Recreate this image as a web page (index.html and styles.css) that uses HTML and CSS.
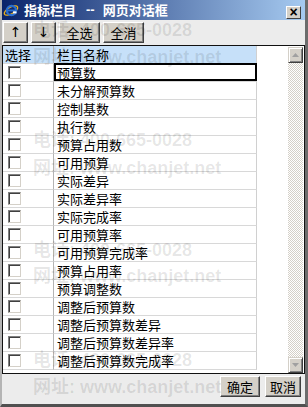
FILE: index.html
```html
<!DOCTYPE html>
<html lang="zh-CN">
<head>
    <meta charset="UTF-8">
    <title>指标栏目 -- 网页对话框</title>
    <link rel="stylesheet" href="styles.css">
</head>
<body>
    <div class="window">
        <div class="titlebar">
            <svg class="ie-icon" width="16" height="16" viewBox="0 0 16 16">
                <ellipse cx="8" cy="8.5" rx="7.5" ry="3.2" transform="rotate(-30 8 8.5)" fill="none" stroke="#e8b020" stroke-width="1.4"/>
                <circle cx="8.5" cy="8.5" r="4.6" fill="none" stroke="#2a6fd0" stroke-width="2.2"/>
                <rect x="4.5" y="7.6" width="8" height="1.8" fill="#2a6fd0"/>
                <rect x="10" y="9.4" width="3.5" height="2" fill="#fff"/>
            </svg>
            <span class="title">指标栏目</span>
            <span class="title title-sep">--</span>
            <span class="title">网页对话框</span>
            <button class="close-btn">×</button>
        </div>

        <div class="toolbar">
            <button class="btn btn-arrow">↑</button>
            <button class="btn btn-arrow">↓</button>
            <button class="btn btn-wide">全选</button>
            <button class="btn btn-wide">全消</button>
        </div>

        <div class="grid-box">
            <div class="grid-main">
                <div class="grid-head">
                    <div class="cell col-check">选择</div>
                    <div class="cell col-name">栏目名称</div>
                </div>
                <div class="grid-body">
                    <div class="row"><div class="cell col-check"><span class="checkbox"></span></div><div class="cell col-name selected">预算数</div></div>
                    <div class="row"><div class="cell col-check"><span class="checkbox"></span></div><div class="cell col-name">未分解预算数</div></div>
                    <div class="row"><div class="cell col-check"><span class="checkbox"></span></div><div class="cell col-name">控制基数</div></div>
                    <div class="row"><div class="cell col-check"><span class="checkbox"></span></div><div class="cell col-name">执行数</div></div>
                    <div class="row"><div class="cell col-check"><span class="checkbox"></span></div><div class="cell col-name">预算占用数</div></div>
                    <div class="row"><div class="cell col-check"><span class="checkbox"></span></div><div class="cell col-name">可用预算</div></div>
                    <div class="row"><div class="cell col-check"><span class="checkbox"></span></div><div class="cell col-name">实际差异</div></div>
                    <div class="row"><div class="cell col-check"><span class="checkbox"></span></div><div class="cell col-name">实际差异率</div></div>
                    <div class="row"><div class="cell col-check"><span class="checkbox"></span></div><div class="cell col-name">实际完成率</div></div>
                    <div class="row"><div class="cell col-check"><span class="checkbox"></span></div><div class="cell col-name">可用预算率</div></div>
                    <div class="row"><div class="cell col-check"><span class="checkbox"></span></div><div class="cell col-name">可用预算完成率</div></div>
                    <div class="row"><div class="cell col-check"><span class="checkbox"></span></div><div class="cell col-name">预算占用率</div></div>
                    <div class="row"><div class="cell col-check"><span class="checkbox"></span></div><div class="cell col-name">预算调整数</div></div>
                    <div class="row"><div class="cell col-check"><span class="checkbox"></span></div><div class="cell col-name">调整后预算数</div></div>
                    <div class="row"><div class="cell col-check"><span class="checkbox"></span></div><div class="cell col-name">调整后预算数差异</div></div>
                    <div class="row"><div class="cell col-check"><span class="checkbox"></span></div><div class="cell col-name">调整后预算数差异率</div></div>
                    <div class="row last"><div class="cell col-check"><span class="checkbox"></span></div><div class="cell col-name">调整后预算数完成率</div></div>
                </div>
            </div>
            <div class="scrollbar">
                <div class="sb-btn">
                    <svg width="7" height="4" viewBox="0 0 7 4"><polygon points="3.5,0 7,4 0,4" fill="#a0a0a0"/></svg>
                </div>
                <div class="sb-track"></div>
                <div class="sb-btn">
                    <svg width="7" height="4" viewBox="0 0 7 4"><polygon points="0,0 7,0 3.5,4" fill="#a0a0a0"/></svg>
                </div>
            </div>
        </div>

        <div class="footer">
            <button class="btn btn-ok">确定</button>
            <button class="btn btn-cancel">取消</button>
        </div>

        <!-- watermark over the whole dialog -->
        <div class="watermark">
            <div class="wm-line" style="top: 22px">电话: 400-665-0028</div>
            <div class="wm-line" style="top: 49px">网址: www.chanjet.net</div>
            <div class="wm-line" style="top: 132px">电话: 400-665-0028</div>
            <div class="wm-line" style="top: 160px">网址: www.chanjet.net</div>
            <div class="wm-line" style="top: 242px">电话: 400-665-0028</div>
            <div class="wm-line" style="top: 268px">网址: www.chanjet.net</div>
            <div class="wm-line" style="top: 352px">电话: 400-665-0028</div>
            <div class="wm-line" style="top: 379px">网址: www.chanjet.net</div>
        </div>
    </div>
</body>
</html>
```

FILE: styles.css
```css
body {
    margin: 0;
    font-family: "Noto Sans CJK SC", "Liberation Sans", sans-serif;
    font-size: 13px;
    color: #000;
}
.window {
    position: relative;
    width: 308px;
    height: 407px;
    box-sizing: border-box;
    display: flex;
    flex-direction: column;
    background-color: #ececec;
    border-left: 2px solid #b4b4b4;
    border-right: 3px solid #6c6c6c;
    border-bottom: 3px solid #505050;
    overflow: hidden;
}
.titlebar {
    height: 20px;
    flex: none;
    display: flex;
    align-items: center;
    background: linear-gradient(to right, #0a246a, #a6caf0);
}
.ie-icon {
    margin-left: 1px;
    flex: none;
}
.title {
    margin-left: 5px;
    color: #fff;
    font-weight: bold;
    font-size: 13px;
    white-space: pre;
    line-height: 20px;
}
.title-sep {
    margin: 0 8px 0 10px;
    font-family: "Liberation Sans", sans-serif;
}
.title-sep + .title {
    margin-left: 0;
}
.close-btn {
    margin-left: auto;
    margin-right: 4px;
    align-self: flex-end;
    margin-bottom: 1px;
    width: 15px;
    height: 13px;
    padding: 0;
    background-color: #d4d0c8;
    border: 1px solid;
    border-color: #fff #404040 #404040 #fff;
    font-family: "Liberation Sans", sans-serif;
    font-size: 14px;
    font-weight: bold;
    line-height: 9px;
    color: #000;
}
.btn {
    height: 21px;
    padding: 0;
    background-color: #d4d0c8;
    border: 1px solid;
    border-color: #fff #404040 #404040 #fff;
    box-shadow: inset -1px -1px 0 #808080;
    font-family: "Noto Sans CJK SC", sans-serif;
    font-size: 13px;
    line-height: 17px;
    color: #000;
}
.toolbar {
    height: 25px;
    flex: none;
    box-sizing: border-box;
    display: flex;
    gap: 3px;
    padding: 2px 0 0 1px;
}
.btn-arrow {
    width: 25px;
    font-family: "DejaVu Sans", sans-serif;
    font-size: 14px;
}
.btn-wide {
    width: 41px;
}
.grid-box {
    height: 329px;
    flex: none;
    box-sizing: border-box;
    display: flex;
    border: 1px solid #111;
    background-color: #fff;
}
.grid-main {
    flex: 1;
}
.grid-head,
.row {
    display: flex;
    width: 254px;
}
.grid-head {
    height: 17px;
    background-color: #c6e0f9;
}
.cell {
    box-sizing: border-box;
    display: flex;
    align-items: center;
    white-space: nowrap;
}
.col-check {
    width: 51px;
    border-right: 1px solid #b4b4b4;
}
.col-name {
    width: 203px;
    padding-left: 3px;
    border-right: 1px solid #d0d0d0;
}
.grid-head .col-check {
    padding-left: 2px;
}
.row .cell {
    height: 18px;
    border-top: 1px solid #d8d8d8;
}
.row.last .cell {
    height: 19px;
    border-bottom: 1px solid #d8d8d8;
}
.row .col-check {
    padding-left: 5px;
}
.grid-body {
    border-right: 1px solid #d0d0d0;
    width: 253px;
    height: 306px;
}
.selected {
    outline: 2px solid #000;
    outline-offset: -2px;
}
.checkbox {
    width: 13px;
    height: 13px;
    box-sizing: border-box;
    background-color: #fff;
    border: 1px solid;
    border-color: #808080 #d4d0c8 #d4d0c8 #808080;
    box-shadow: inset 1px 1px 0 #404040;
}
.scrollbar {
    width: 15px;
    margin: 1px 1px 0 0;
    display: flex;
    flex-direction: column;
}
.sb-btn {
    height: 16px;
    box-sizing: border-box;
    display: flex;
    align-items: center;
    justify-content: center;
    background-color: #d4d0c8;
    border: 1px solid;
    border-color: #d4d0c8 #404040 #404040 #d4d0c8;
    box-shadow: inset 1px 1px 0 #fff, inset -1px -1px 0 #808080;
}
.sb-track {
    flex: 1;
    background: repeating-conic-gradient(#d4d0c8 0 25%, #fff 0 50%) 0 0 / 2px 2px;
}
.footer {
    flex: 1;
    display: flex;
    justify-content: flex-end;
    align-items: flex-start;
    gap: 5px;
    padding: 2px 4px 0 0;
}
.btn-ok {
    width: 40px;
}
.btn-cancel {
    width: 36px;
}
.watermark {
    position: absolute;
    top: 0;
    left: 0;
    right: 0;
    bottom: 0;
    pointer-events: none;
}
.wm-line {
    position: absolute;
    left: 31px;
    font-family: "Liberation Sans", "Noto Sans CJK SC", sans-serif;
    font-size: 18px;
    font-weight: bold;
    line-height: 16px;
    color: rgba(0, 0, 0, 0.1);
    white-space: nowrap;
}
```
